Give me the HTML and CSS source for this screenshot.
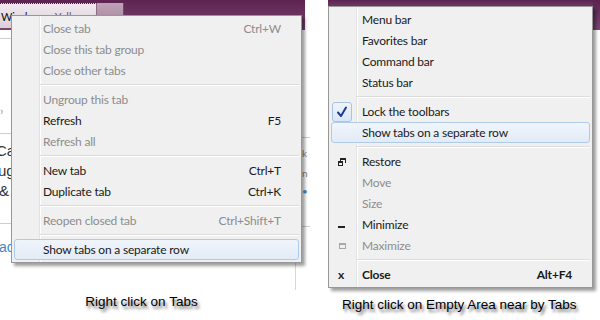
FILE: index.html
```html
<!DOCTYPE html>
<html>
<head>
<meta charset="utf-8">
<link rel="stylesheet" href="styles.css">
</head>
<body>
<div class="wrap">
  <div class="shot shot-left">
    <div class="tabbar">
      <div class="tab tab-active"><span class="tab-t">Windows</span><span class="tab-t2">Yellow</span><span class="tab-x">×</span></div>
      <div class="tab tab-new"></div>
    </div>
    <div class="page">
      <div class="lstrip">
        <div class="hr hr1"></div>
        <div class="frag frag-arrow">›</div>
        <div class="hr hr2"></div>
        <div class="frag frag-big f1">Ca</div>
        <div class="frag frag-big f2">ug</div>
        <div class="frag frag-big f3">&amp;</div>
        <div class="hr hr3"></div>
        <div class="frag frag-link">ac</div>
      </div>
      <div class="mid">
        <div class="vline"></div>
      </div>
      <div class="rstrip">
        <div class="teal"></div>
        <div class="hr hr4"></div>
        <div class="frag frag-sm">k</div>
        <div class="frag frag-sm">n</div>
        <div class="frag frag-dot">•</div>
        <div class="hr hr5"></div>
      </div>
    </div>

    <div class="menu menu-tabs">
      <div class="item dis"><span class="ic"></span><span class="lbl">Close tab</span><span class="key">Ctrl+W</span></div>
      <div class="item dis"><span class="ic"></span><span class="lbl">Close this tab group</span></div>
      <div class="item dis"><span class="ic"></span><span class="lbl">Close other tabs</span></div>
      <div class="sep"></div>
      <div class="item dis"><span class="ic"></span><span class="lbl">Ungroup this tab</span></div>
      <div class="item"><span class="ic"></span><span class="lbl">Refresh</span><span class="key">F5</span></div>
      <div class="item dis"><span class="ic"></span><span class="lbl">Refresh all</span></div>
      <div class="sep"></div>
      <div class="item"><span class="ic"></span><span class="lbl">New tab</span><span class="key">Ctrl+T</span></div>
      <div class="item"><span class="ic"></span><span class="lbl">Duplicate tab</span><span class="key">Ctrl+K</span></div>
      <div class="sep"></div>
      <div class="item dis"><span class="ic"></span><span class="lbl">Reopen closed tab</span><span class="key">Ctrl+Shift+T</span></div>
      <div class="sep"></div>
      <div class="item hot"><span class="ic"></span><span class="lbl">Show tabs on a separate row</span></div>
    </div>
  </div>

  <div class="shot shot-right">
    <div class="topbar">
      <div class="topbar-band"></div>
      <div class="topbar-edge"></div>
    </div>

    <div class="menu menu-bar">
      <div class="item"><span class="ic"></span><span class="lbl">Menu bar</span></div>
      <div class="item"><span class="ic"></span><span class="lbl">Favorites bar</span></div>
      <div class="item"><span class="ic"></span><span class="lbl">Command bar</span></div>
      <div class="item"><span class="ic"></span><span class="lbl">Status bar</span></div>
      <div class="sep"></div>
      <div class="item"><span class="ic"><span class="check"><svg width="18" height="18" viewBox="0 0 18 18"><path d="M5 9.5 L8 13 L13 4.5" fill="none" stroke="#1d3c95" stroke-width="2" stroke-linecap="round" stroke-linejoin="round"/></svg></span></span><span class="lbl">Lock the toolbars</span></div>
      <div class="item hot"><span class="ic"></span><span class="lbl">Show tabs on a separate row</span></div>
      <div class="sep"></div>
      <div class="item"><span class="ic"><svg class="g-restore" width="8" height="8" viewBox="0 0 8 8"><path d="M2 0h6v5H7V2H3v1H2z" fill="#222"/><path d="M0 3h5v5H0z M1 5v2h3V5z" fill="#222" fill-rule="evenodd"/></svg></span><span class="lbl">Restore</span></div>
      <div class="item dis"><span class="ic"></span><span class="lbl">Move</span></div>
      <div class="item dis"><span class="ic"></span><span class="lbl">Size</span></div>
      <div class="item"><span class="ic"><span class="g-min"></span></span><span class="lbl">Minimize</span></div>
      <div class="item dis"><span class="ic"><span class="g-max"></span></span><span class="lbl">Maximize</span></div>
      <div class="sep"></div>
      <div class="item bold"><span class="ic"><span class="g-x">x</span></span><span class="lbl">Close</span><span class="key">Alt+F4</span></div>
    </div>
  </div>

  <div class="cap cap-left">Right click on Tabs</div>
  <div class="cap cap-right">Right click on Empty Area near by Tabs</div>
</div>
</body>
</html>
```

FILE: styles.css
```css
html, body {
  margin: 0;
  padding: 0;
  background: #fff;
}
body {
  width: 600px;
  height: 320px;
  overflow: hidden;
  font-family: Lato, "Noto Sans", sans-serif;
}
.wrap {
  display: grid;
  grid-template-columns: 310px 290px;
  grid-template-rows: 290px 30px;
}
.shot {
  position: relative;
  overflow: visible;
}

/* ---------- left screenshot background ---------- */
.tabbar {
  width: 305px;
  height: 30px;
  background: linear-gradient(#5d2451, #6e3663 60%, #7b4670);
  display: flex;
  align-items: flex-start;
  padding-top: 3px;
  box-sizing: border-box;
}
.tab {
  height: 25px;
  box-sizing: border-box;
}
.tab-active {
  width: 97px;
  background: linear-gradient(#f1e9ef, #dccfd9);
  border-top: 1px dotted #333;
  border-right: 1px solid #8f6a86;
  display: flex;
  align-items: center;
  font-size: 11px;
  color: #111;
  padding-left: 1px;
  gap: 8px;
}
.tab-t2 { color: #666; }
.tab-x { color: #888; margin-left: auto; margin-right: 6px; }
.tab-new {
  width: 27px;
  background: linear-gradient(#c0a3b8, #a07f97);
  border-right: 1px solid #6f4a66;
}
.page {
  display: flex;
  height: 260px;
}
.lstrip {
  width: 12px;
  overflow: hidden;
  display: flex;
  flex-direction: column;
}
.mid {
  width: 284px;
  display: flex;
  justify-content: flex-end;
}
.vline {
  width: 1px;
  height: 28px;
  margin-top: 232px;
  background: #d6d6d6;
}
.rstrip {
  width: 14px;
  overflow: hidden;
  display: flex;
  flex-direction: column;
  padding-left: 6px;
  box-sizing: border-box;
}
.hr {
  height: 1px;
  background: #cfcfcf;
  flex: none;
}
.hr1 { margin-top: 8px; }
.frag {
  flex: none;
  white-space: nowrap;
  color: #444;
  line-height: 1;
}
.frag-arrow { margin-top: 66px; font-size: 12px; color: #999; }
.hr2 { margin-top: 16px; }
.frag-big { font-size: 15px; color: #333; font-family: "Liberation Sans", sans-serif; }
.f1 { margin-top: 9px; margin-left: -4px; }
.f2 { margin-top: 5px; margin-left: -2px; }
.f3 { margin-top: 5px; margin-left: -1px; }
.hr3 { margin-top: 25px; }
.frag-link { margin-top: 16px; font-size: 14px; color: #3f86c2; font-family: "Liberation Sans", sans-serif; margin-left: -1px; }
.teal {
  width: 3px;
  height: 45px;
  background: #2d8fb4;
  margin-left: -3px;
  flex: none;
}
.hr4 { margin-top: 62px; }
.frag-sm { font-size: 10px; color: #888; margin-top: 10px; }
.frag-dot { font-size: 10px; color: #4a8fcf; margin-top: 8px; }
.hr5 { margin-top: 30px; }

/* ---------- right screenshot background ---------- */
.topbar {
  display: flex;
  height: 30px;
  margin-left: 18px;
  align-items: flex-start;
}
.topbar-band {
  flex: 1;
  height: 7px;
  background: linear-gradient(#5b2350, #733c68);
}
.topbar-edge {
  width: 7px;
  height: 30px;
  background: linear-gradient(#5b2350, #7a4570);
}

/* ---------- menus ---------- */
.menu {
  position: absolute;
  box-sizing: border-box;
  border: 1px solid #979797;
  padding: 2px;
  background-color: #f0f0f0;
  background-image: linear-gradient(to right, transparent 27px, #e2e3e3 27px, #e2e3e3 28px, #ffffff 28px, #ffffff 29px, transparent 29px);
  box-shadow: 3px 3px 3px rgba(0, 0, 0, 0.38);
  font-size: 12px;
  letter-spacing: -0.2px;
  color: #1a1a1a;
}
.menu-tabs {
  left: 11px;
  top: 15px;
  width: 291px;
}
.menu-bar {
  left: 18px;
  top: 6px;
  width: 265px;
}
.item {
  display: flex;
  align-items: center;
  height: 21px;
  box-sizing: border-box;
  padding-right: 17px;
  white-space: nowrap;
  border: 1px solid transparent;
  border-radius: 3px;
}
.menu-tabs .ic { width: 28px; }
.menu-bar .ic { width: 30px; }
.ic {
  flex: none;
  display: flex;
  align-items: center;
  height: 19px;
}
.lbl { flex: 1; }
.key { flex: none; }
.dis { color: #8d8d8d; }
.bold { font-weight: bold; }
.hot {
  border-color: #aecbeb;
  background: linear-gradient(#f0f5fb, #e3ebf6);
}
.sep {
  height: 8px;
  margin-left: 26px;
  background: linear-gradient(to bottom, transparent 3px, #dcdcdc 3px, #dcdcdc 4px, #ffffff 4px, #ffffff 5px, transparent 5px);
}

/* gutter glyphs */
.check {
  width: 20px;
  height: 20px;
  box-sizing: border-box;
  margin-left: 0;
  margin-top: 1px;
  border: 1px solid #a9c3e4;
  border-radius: 3px;
  background: linear-gradient(#eef4fb, #dce7f5);
  display: flex;
  align-items: center;
  justify-content: center;
}
.g-restore { margin-left: 6px; }
.g-min {
  width: 7px;
  height: 2px;
  background: #222;
  margin-left: 6px;
  margin-top: 5px;
}
.g-max {
  width: 7px;
  height: 6px;
  box-sizing: border-box;
  border: 1px solid #a8a8a8;
  border-top-width: 2px;
  margin-left: 7px;
}
.g-x {
  font-weight: bold;
  font-size: 12px;
  color: #222;
  margin-left: 6px;
  margin-top: -1px;
}

/* ---------- captions ---------- */
.cap {
  font-family: "Liberation Sans", Arial, sans-serif;
  font-size: 13.5px;
  line-height: 16px;
  color: #000;
  text-shadow: 2px 3px 3px rgba(0, 0, 0, 0.6);
  white-space: nowrap;
}
.cap-left {
  width: 283px;
  text-align: center;
  padding-top: 4px;
}
.cap-right {
  padding-left: 32px;
  padding-top: 7px;
}
```
